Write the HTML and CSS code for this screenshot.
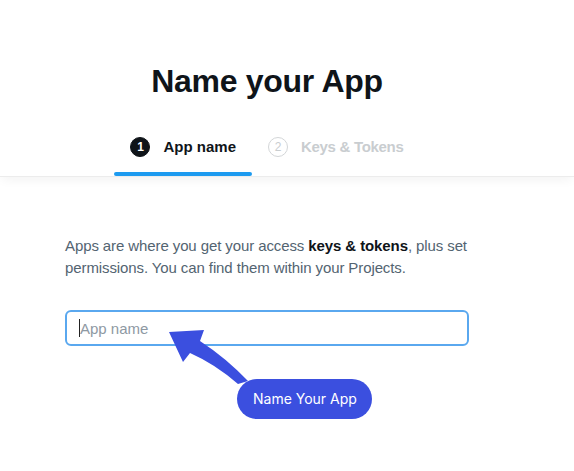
FILE: index.html
```html
<!DOCTYPE html>
<html lang="en">
<head>
    <meta charset="UTF-8">
    <meta name="viewport" content="width=device-width, initial-scale=1.0">
    <title>Name your App</title>
    <link rel="stylesheet" href="styles.css">
</head>
<body>

<div class="header">
    <div class="column">
        <h1 class="title">Name your App</h1>
        <div class="tabs">
            <div class="tab active">
                <span class="step">1</span>
                <span class="tab-label">App name</span>
            </div>
            <div class="tab">
                <span class="step">2</span>
                <span class="tab-label">Keys &amp; Tokens</span>
            </div>
        </div>
    </div>
</div>

<div class="column content">
    <p class="intro">Apps are where you get your access <b>keys &amp; tokens</b>, plus set permissions. You can find them within your Projects.</p>

    <div class="field">
        <input class="app-input" type="text" placeholder="App name">
        <span class="caret"></span>
        <!-- annotation arrow pointing at the input -->
        <svg class="arrow" width="100" height="70" viewBox="0 0 100 70">
            <path d="M9 12 L44 10 L40 21 Q66 38 88 61 L78 64 Q55 44 30 33 L23 42 Z" fill="#3b4fdf"/>
        </svg>
    </div>

    <div class="hint">Name Your App</div>
</div>

</body>
</html>
```

FILE: styles.css
```css
body {
    margin: 0;
    font-family: "Liberation Sans", Arial, sans-serif;
    background-color: #ffffff;
    color: #0f1419;
}
.column {
    width: 404px;
    margin-left: 65px;
}
.header {
    padding-top: 63px;
    box-shadow: 0 1px 0 #ececec, 0 6px 10px -2px rgba(0, 0, 0, 0.05);
}
.title {
    margin: 0;
    font-size: 32px;
    line-height: 37px;
    font-weight: bold;
    letter-spacing: -0.3px;
    text-align: center;
}
.tabs {
    display: flex;
    justify-content: center;
    margin-top: 24px;
}
.tab {
    position: relative;
    display: flex;
    align-items: center;
    gap: 13px;
    padding: 13px 16px 19px;
    font-size: 15px;
    line-height: 20px;
    font-weight: bold;
    color: #c9cdd0;
}
.tab-label {
    letter-spacing: -0.3px;
}
.tab.active .tab-label {
    letter-spacing: 0;
}
.tab.active {
    color: #0f1419;
}
.tab.active::after {
    content: "";
    position: absolute;
    left: 0;
    right: 0;
    bottom: 0;
    height: 4px;
    border-radius: 2px;
    background-color: #1d9bf0;
}
.step {
    box-sizing: border-box;
    width: 20px;
    height: 20px;
    border-radius: 50%;
    border: 1.5px solid #d3d6d8;
    display: flex;
    justify-content: center;
    align-items: center;
    font-size: 12px;
    font-weight: normal;
}
.tab.active .step {
    border-color: #0f1419;
    background-color: #0f1419;
    color: #ffffff;
    font-weight: bold;
}
.content {
    padding-top: 59px;
}
.intro {
    margin: 0;
    font-size: 15px;
    line-height: 22px;
    letter-spacing: -0.1px;
    color: #536471;
}
.intro b {
    color: #0f1419;
}
.field {
    position: relative;
    margin-top: 31px;
}
.app-input {
    box-sizing: border-box;
    display: block;
    width: 100%;
    height: 36px;
    padding: 0 13px;
    border: 2px solid #5aa8ef;
    border-radius: 6px;
    font-family: inherit;
    font-size: 15px;
    color: #0f1419;
    outline: none;
}
.app-input::placeholder {
    color: #8e99a3;
}
.caret {
    position: absolute;
    left: 14px;
    top: 9px;
    width: 1px;
    height: 18px;
    background-color: #222;
}
.arrow {
    position: absolute;
    left: 95px;
    top: 10px;
}
.hint {
    display: inline-block;
    margin-top: 33px;
    margin-left: 172px;
    height: 40px;
    line-height: 40px;
    padding: 0 15px 0 16px;
    border-radius: 20px;
    background-color: #3b4fdf;
    color: #ffffff;
    font-family: Inter, "Liberation Sans", sans-serif;
    font-size: 14px;
}
```
